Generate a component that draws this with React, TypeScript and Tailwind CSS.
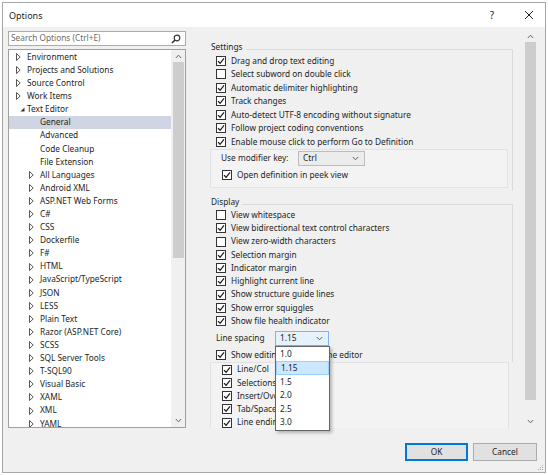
import React from "react";

type TreeItem = { label: string; level: 0 | 1; kind: "c" | "e" | "n"; sel?: boolean };

const tree: TreeItem[] = [
  { label: "Environment", level: 0, kind: "c" },
  { label: "Projects and Solutions", level: 0, kind: "c" },
  { label: "Source Control", level: 0, kind: "c" },
  { label: "Work Items", level: 0, kind: "c" },
  { label: "Text Editor", level: 0, kind: "e" },
  { label: "General", level: 1, kind: "n", sel: true },
  { label: "Advanced", level: 1, kind: "n" },
  { label: "Code Cleanup", level: 1, kind: "n" },
  { label: "File Extension", level: 1, kind: "n" },
  { label: "All Languages", level: 1, kind: "c" },
  { label: "Android XML", level: 1, kind: "c" },
  { label: "ASP.NET Web Forms", level: 1, kind: "c" },
  { label: "C#", level: 1, kind: "c" },
  { label: "CSS", level: 1, kind: "c" },
  { label: "Dockerfile", level: 1, kind: "c" },
  { label: "F#", level: 1, kind: "c" },
  { label: "HTML", level: 1, kind: "c" },
  { label: "JavaScript/TypeScript", level: 1, kind: "c" },
  { label: "JSON", level: 1, kind: "c" },
  { label: "LESS", level: 1, kind: "c" },
  { label: "Plain Text", level: 1, kind: "c" },
  { label: "Razor (ASP.NET Core)", level: 1, kind: "c" },
  { label: "SCSS", level: 1, kind: "c" },
  { label: "SQL Server Tools", level: 1, kind: "c" },
  { label: "T-SQL90", level: 1, kind: "c" },
  { label: "Visual Basic", level: 1, kind: "c" },
  { label: "XAML", level: 1, kind: "c" },
  { label: "XML", level: 1, kind: "c" },
  { label: "YAML", level: 1, kind: "c" },
];

function Check({ checked }: { checked: boolean }) {
  return (
    <span className="w-[10px] h-[10px] border border-[#333333] bg-white flex items-center justify-center shrink-0">
      {checked && (
        <svg width="8" height="8" viewBox="0 0 8 8">
          <path d="M1 4.1 L3.1 6.3 L7 1.3" stroke="#1e1e1e" strokeWidth="1.25" fill="none" />
        </svg>
      )}
    </span>
  );
}

function Row({ checked, label }: { checked: boolean; label: string }) {
  return (
    <div className="flex items-center gap-[5px] whitespace-nowrap h-[13.5px]">
      <Check checked={checked} />
      <span>{label}</span>
    </div>
  );
}

function Row2({ checked, label }: { checked: boolean; label: string }) {
  return (
    <div className="flex items-center gap-[5px] whitespace-nowrap h-[13.25px]">
      <Check checked={checked} />
      <span>{label}</span>
    </div>
  );
}

function Chevron({ dir }: { dir: "up" | "down" }) {
  return (
    <svg width="7" height="5" viewBox="0 0 7 5">
      {dir === "up" ? (
        <path d="M0.8 4 L3.5 1.2 L6.2 4" stroke="#606060" strokeWidth="1" fill="none" />
      ) : (
        <path d="M0.8 1 L3.5 3.8 L6.2 1" stroke="#606060" strokeWidth="1" fill="none" />
      )}
    </svg>
  );
}

export default function App() {
  return (
    <div className="w-[548px] h-[475px] bg-white p-[2px] font-['Noto_Sans','Open_Sans',sans-serif] text-[8.3px] text-[#1e1e1e] leading-none">
      <div className="w-full h-full border border-[#a6a6a6] flex flex-col">
        {/* title bar */}
        <div className="h-[24px] bg-white flex items-center shrink-0">
          <span className="pl-[6px] text-[9px]">Options</span>
          <span className="ml-auto text-[10px] mr-[30px]">?</span>
          <svg width="10" height="10" viewBox="0 0 10 10" className="mr-[11px]">
            <path d="M1 1 L9 9 M9 1 L1 9" stroke="#222" strokeWidth="1" />
          </svg>
        </div>

        {/* body */}
        <div className="flex-1 bg-[#f0f0f0] flex flex-col relative">
          <div className="flex pt-[3px]">
            {/* left column */}
            <div className="w-[178px] ml-[5px] mt-[1px] flex flex-col shrink-0">
              <div className="h-[15px] bg-white border border-[#ababab] flex items-center pl-[2px] pr-[4px]">
                <span className="text-[#6d6d6d]">Search Options (Ctrl+E)</span>
                <svg width="10" height="10" viewBox="0 0 10 10" className="ml-auto">
                  <circle cx="6" cy="4" r="2.8" stroke="#333" strokeWidth="1.2" fill="none" />
                  <path d="M4 6 L1 9" stroke="#333" strokeWidth="1.6" />
                </svg>
              </div>
              <div className="h-[379px] mt-[3px] bg-white border border-[#a0a0a0] flex overflow-hidden">
                <div className="flex-1 pt-[0.5px] overflow-hidden">
                  {tree.map((t) => (
                    <div
                      key={t.label}
                      className={`flex items-center h-[13.1px] whitespace-nowrap ${t.level === 0 ? "pl-[7px]" : "pl-[20px]"} ${t.sel ? "bg-[#d0d5e3]" : ""}`}
                    >
                      <span className="w-[11px] flex items-center shrink-0">
                        {t.kind === "c" && (
                          <svg width="5" height="8" viewBox="0 0 5 8">
                            <polygon points="0.5,0.5 4.2,4 0.5,7.5" stroke="#444" strokeWidth="0.9" fill="white" />
                          </svg>
                        )}
                        {t.kind === "e" && (
                          <svg width="5" height="5" viewBox="0 0 5 5" className="ml-[4px]">
                            <polygon points="4.5,0.5 4.5,4.5 0.5,4.5" fill="#333" />
                          </svg>
                        )}
                      </span>
                      <span>{t.label}</span>
                    </div>
                  ))}
                </div>
                <div className="w-[14px] bg-[#f0f0f0] flex flex-col items-center shrink-0">
                  <div className="h-[12px] flex items-center justify-center">
                    <Chevron dir="up" />
                  </div>
                  <div className="w-[11px] h-[196px] bg-[#cdcdcd]" />
                  <div className="mt-auto h-[13px] flex items-center justify-center">
                    <Chevron dir="down" />
                  </div>
                </div>
              </div>
            </div>

            {/* right column */}
            <div className="flex-1 ml-[14px] mr-[8px] h-[398px] flex">
              <div className="flex-1 pt-[11px] pl-[10px] pr-[10px] flex flex-col">
                {/* Settings group */}
                <div className="border-t border-r border-[#dadada] mt-[8px] pb-[3px]">
                  <div className="-mt-[9px] h-[13px] flex items-center">
                    <span className="bg-[#f0f0f0] pl-[1px] pr-[3px]">Settings</span>
                  </div>
                  <div className="pl-[6px]">
                    <Row checked label="Drag and drop text editing" />
                    <Row checked={false} label="Select subword on double click" />
                    <Row checked label="Automatic delimiter highlighting" />
                    <Row checked label="Track changes" />
                    <Row checked label="Auto-detect UTF-8 encoding without signature" />
                    <Row checked label="Follow project coding conventions" />
                    <Row checked label="Enable mouse click to perform Go to Definition" />
                  </div>
                  <div className="mr-[4px] bg-[#f3f3f3] border border-[#e2e2e2] pt-[1px] pb-[5px]">
                    <div className="flex items-center h-[15px] pl-[10px]">
                      <span className="w-[77px] shrink-0">Use modifier key:</span>
                      <div className="w-[67px] h-[15px] bg-[#ececec] border border-[#bcbcbc] flex items-center pl-[4px] pr-[5px]">
                        <span>Ctrl</span>
                        <span className="ml-auto">
                          <Chevron dir="down" />
                        </span>
                      </div>
                    </div>
                    <div className="pl-[11px] mt-[2.5px]">
                      <Row checked label="Open definition in peek view" />
                    </div>
                  </div>
                </div>

                {/* Display group */}
                <div className="border-t border-r border-[#dadada] mt-[13px]">
                  <div className="-mt-[8px] h-[12px] flex items-center">
                    <span className="bg-[#f0f0f0] pl-[1px] pr-[3px]">Display</span>
                  </div>
                  <div className="pl-[6px]">
                    <Row2 checked={false} label="View whitespace" />
                    <Row2 checked label="View bidirectional text control characters" />
                    <Row2 checked={false} label="View zero-width characters" />
                    <Row2 checked label="Selection margin" />
                    <Row2 checked label="Indicator margin" />
                    <Row2 checked label="Highlight current line" />
                    <Row2 checked label="Show structure guide lines" />
                    <Row2 checked label="Show error squiggles" />
                    <Row2 checked label="Show file health indicator" />
                    <div className="flex items-center h-[15px] mt-[3px]">
                      <span className="w-[59px] shrink-0">Line spacing</span>
                      <div className="relative w-[54px] h-[15px]">
                        <div className="w-full h-full bg-[#e5f1fb] border border-[#7eb4ea] flex items-center pl-[4px] pr-[5px]">
                          <span>1.15</span>
                          <span className="ml-auto">
                            <Chevron dir="down" />
                          </span>
                        </div>
                        <div className="absolute left-0 top-[15px] z-10 w-[55px] h-[85px] bg-white border border-[#646464] shadow-[2px_2px_3px_rgba(0,0,0,0.25)] pt-[1px]">
                          {["1.0", "1.15", "1.5", "2.0", "2.5", "3.0"].map((v) => (
                            <div
                              key={v}
                              className={`h-[13.6px] flex items-center pl-[4px] ${v === "1.15" ? "bg-[#cce8ff] border border-[#99d1ff] pl-[3px]" : ""}`}
                            >
                              {v}
                            </div>
                          ))}
                        </div>
                      </div>
                    </div>
                    <div className="mt-[3px]">
                      <Row2 checked label="Show editing context in the editor" />
                    </div>
                  </div>
                </div>
                <div className="mr-[4px] flex-1 bg-[#f3f3f3] border-t border-l border-r border-[#e2e2e2] overflow-hidden pl-[11px]">
                  <Row2 checked label="Line/Col" />
                  <Row2 checked label="Selections" />
                  <Row2 checked label="Insert/Overwrite" />
                  <Row2 checked label="Tab/Spaces" />
                  <Row2 checked label="Line endings" />
                </div>
              </div>
              {/* right scrollbar */}
              <div className="w-[14px] bg-[#f0f0f0] flex flex-col items-center shrink-0">
                <div className="h-[12px] flex items-center justify-center">
                  <Chevron dir="up" />
                </div>
                <div className="w-[11px] h-[358px] bg-[#cdcdcd]" />
                <div className="mt-auto h-[14px] flex items-center justify-center">
                  <Chevron dir="down" />
                </div>
              </div>
            </div>
          </div>

          {/* buttons */}
          <div className="flex justify-end gap-[5px] mt-[15px] mr-[8px]">
            <button className="w-[63px] h-[18px] bg-[#e1e1e1] border-2 border-[#0078d7] flex items-center justify-center">
              OK
            </button>
            <button className="w-[64px] h-[18px] bg-[#e1e1e1] border border-[#adadad] flex items-center justify-center">
              Cancel
            </button>
          </div>
          <svg width="8" height="8" viewBox="0 0 8 8" className="absolute right-[1px] bottom-[1px]">
            <rect x="6" y="2" width="1" height="1" fill="#aaa" />
            <rect x="4" y="4" width="1" height="1" fill="#aaa" />
            <rect x="6" y="4" width="1" height="1" fill="#aaa" />
            <rect x="2" y="6" width="1" height="1" fill="#aaa" />
            <rect x="4" y="6" width="1" height="1" fill="#aaa" />
            <rect x="6" y="6" width="1" height="1" fill="#aaa" />
          </svg>
        </div>
      </div>
    </div>
  );
}
